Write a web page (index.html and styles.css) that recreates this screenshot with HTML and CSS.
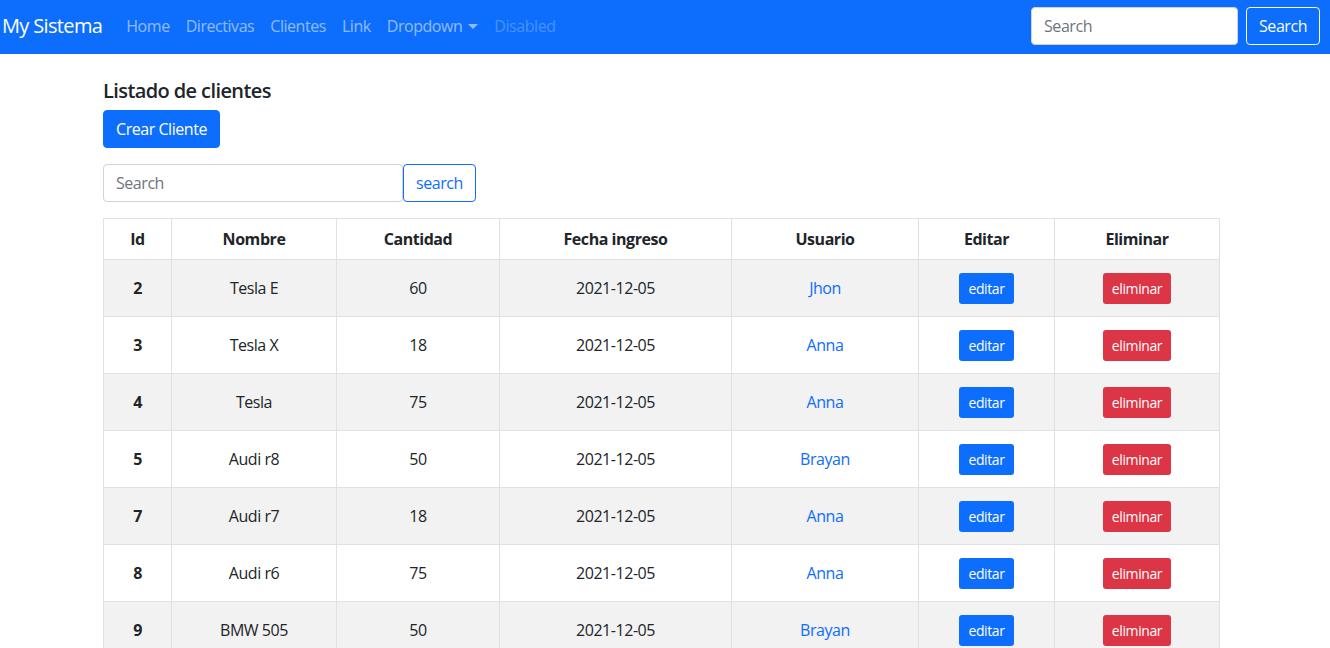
FILE: index.html
```html
<!DOCTYPE html>
<html lang="es">
<head>
<meta charset="utf-8">
<title>My Sistema</title>
<link rel="stylesheet" href="styles.css">
</head>
<body>
<nav class="navbar">
  <a class="brand" href="#">My Sistema</a>
  <ul class="nav">
    <li><a class="nav-link" href="#">Home</a></li>
    <li><a class="nav-link" href="#">Directivas</a></li>
    <li><a class="nav-link" href="#">Clientes</a></li>
    <li><a class="nav-link" href="#">Link</a></li>
    <li><a class="nav-link dropdown" href="#">Dropdown<span class="caret"></span></a></li>
    <li><a class="nav-link disabled" href="#">Disabled</a></li>
  </ul>
  <form class="nav-search">
    <input class="nav-input" type="text" placeholder="Search">
    <button class="btn-outline-light" type="button">Search</button>
  </form>
</nav>

<main class="container">
  <h4 class="title">Listado de clientes</h4>
  <button class="btn btn-primary" type="button">Crear Cliente</button>
  <div class="search-row">
    <input class="form-input" type="text" placeholder="Search">
    <button class="btn-outline-primary" type="button">search</button>
  </div>
  <table class="table">
    <thead>
      <tr>
        <th class="c1">Id</th>
        <th class="c2">Nombre</th>
        <th class="c3">Cantidad</th>
        <th class="c4">Fecha ingreso</th>
        <th class="c5">Usuario</th>
        <th class="c6">Editar</th>
        <th class="c7">Eliminar</th>
      </tr>
    </thead>
    <tbody>
      <tr><th>2</th><td>Tesla E</td><td>60</td><td>2021-12-05</td><td><a href="#">Jhon</a></td><td><button class="btn-sm btn-primary">editar</button></td><td><button class="btn-sm btn-danger">eliminar</button></td></tr>
      <tr><th>3</th><td>Tesla X</td><td>18</td><td>2021-12-05</td><td><a href="#">Anna</a></td><td><button class="btn-sm btn-primary">editar</button></td><td><button class="btn-sm btn-danger">eliminar</button></td></tr>
      <tr><th>4</th><td>Tesla</td><td>75</td><td>2021-12-05</td><td><a href="#">Anna</a></td><td><button class="btn-sm btn-primary">editar</button></td><td><button class="btn-sm btn-danger">eliminar</button></td></tr>
      <tr><th>5</th><td>Audi r8</td><td>50</td><td>2021-12-05</td><td><a href="#">Brayan</a></td><td><button class="btn-sm btn-primary">editar</button></td><td><button class="btn-sm btn-danger">eliminar</button></td></tr>
      <tr><th>7</th><td>Audi r7</td><td>18</td><td>2021-12-05</td><td><a href="#">Anna</a></td><td><button class="btn-sm btn-primary">editar</button></td><td><button class="btn-sm btn-danger">eliminar</button></td></tr>
      <tr><th>8</th><td>Audi r6</td><td>75</td><td>2021-12-05</td><td><a href="#">Anna</a></td><td><button class="btn-sm btn-primary">editar</button></td><td><button class="btn-sm btn-danger">eliminar</button></td></tr>
      <tr><th>9</th><td>BMW 505</td><td>50</td><td>2021-12-05</td><td><a href="#">Brayan</a></td><td><button class="btn-sm btn-primary">editar</button></td><td><button class="btn-sm btn-danger">eliminar</button></td></tr>
    </tbody>
  </table>
</main>
</body>
</html>
```
FILE: styles.css
```css
* { box-sizing: border-box; }
html, body { margin: 0; }
body {
  font-family: "Open Sans", "Noto Sans", sans-serif;
  font-size: 16px;
  line-height: 1.5;
  letter-spacing: -0.45px;
  color: #212529;
  background: #fff;
}
button, input { font-family: inherit; letter-spacing: inherit; }

.navbar {
  display: flex;
  align-items: center;
  height: 54px;
  background: #0d6efd;
  padding: 0 10px 2px 2px;
}
.brand {
  color: #fff;
  text-decoration: none;
  font-size: 20px;
  margin-right: 16px;
  letter-spacing: -0.65px;
}
.nav {
  display: flex;
  list-style: none;
  margin: 0;
  padding: 0;
  flex: 1;
}
.nav-link {
  display: block;
  padding: 8px 8px;
  color: rgba(255,255,255,.55);
  text-decoration: none;
  font-size: 16px;
}
.nav-link.disabled { color: rgba(255,255,255,.25); }
.caret {
  display: inline-block;
  margin-left: 6px;
  vertical-align: 3px;
  border-top: 5px solid rgba(255,255,255,.55);
  border-left: 5px solid transparent;
  border-right: 5px solid transparent;
}
.nav-search { display: flex; gap: 8px; }
.nav-input {
  width: 207px;
  height: 38px;
  border: 1px solid #ced4da;
  border-radius: 4px;
  padding: 6px 12px;
  font-size: 16px;
  color: #212529;
}
.nav-input::placeholder, .form-input::placeholder { color: #6c757d; }
.btn-outline-light {
  height: 38px;
  padding: 6px 12px;
  background: transparent;
  border: 1px solid #f8f9fa;
  border-radius: 4px;
  color: #f8f9fa;
  font-size: 16px;
}

.container {
  width: 1116px;
  margin-left: 103px;
  padding-top: 24px;
}
.title {
  margin: 0;
  font-size: 20px;
  font-weight: 600;
  letter-spacing: -0.6px;
  line-height: 1.2;
  height: 32px;
  padding-top: 1px;
}
.btn {
  height: 38px;
  padding: 6px 12px;
  font-size: 16px;
  border-radius: 4px;
  border: 1px solid transparent;
}
.btn-primary { background: #0d6efd; border-color: #0d6efd; color: #fff; }
.btn-danger { background: #dc3545; border-color: #dc3545; color: #fff; }
.search-row {
  display: flex;
  margin-top: 16px;
  margin-bottom: 16px;
}
.form-input {
  width: 300px;
  height: 38px;
  border: 1px solid #ced4da;
  border-radius: 4px;
  padding: 6px 12px;
  font-size: 16px;
}
.btn-outline-primary {
  height: 38px;
  padding: 6px 12px;
  background: #fff;
  border: 1px solid #0d6efd;
  border-radius: 4px;
  color: #0d6efd;
  font-size: 16px;
}

.table {
  width: 1116px;
  border-collapse: collapse;
  table-layout: fixed;
}
.table th, .table td {
  border: 1px solid #dee2e6;
  text-align: center;
  vertical-align: middle;
  padding: 0 8px;
}
.table thead tr { height: 41px; }
.table tbody tr { height: 57px; }
.table tbody tr:nth-child(odd) { background: #f2f2f2; }
.table th { font-weight: 700; }
.table a { color: #0d6efd; text-decoration: none; }
.c1 { width: 68px; }
.c2 { width: 165px; }
.c3 { width: 163px; }
.c4 { width: 232px; }
.c5 { width: 187px; }
.c6 { width: 136px; }
.c7 { width: 165px; }
.btn-sm {
  height: 31px;
  padding: 4px 8px;
  font-size: 14px;
  letter-spacing: -0.4px;
  border-radius: 3px;
  border: 1px solid transparent;
}
```
